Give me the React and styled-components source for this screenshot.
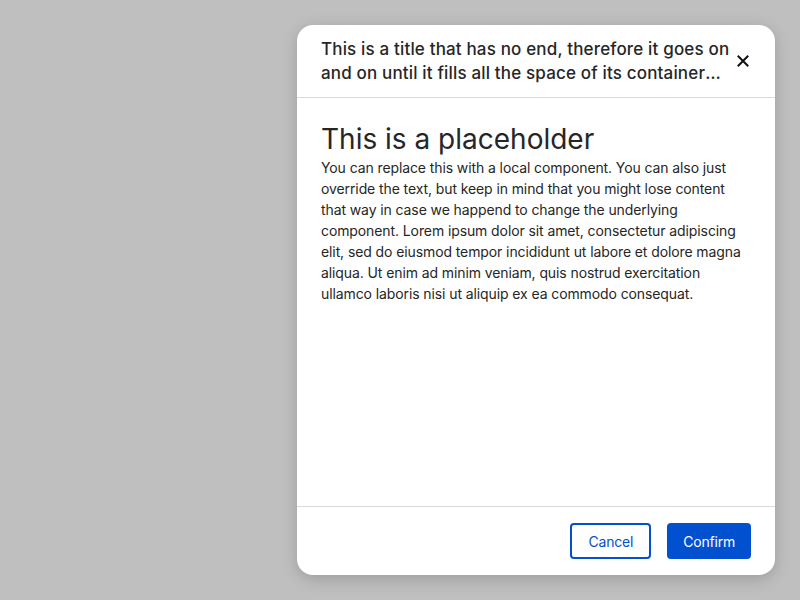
import React from 'react';
import styled, { createGlobalStyle } from 'styled-components';

const GlobalStyle = createGlobalStyle`
  * { box-sizing: border-box; }
  html, body {
    margin: 0;
    height: 100%;
    background: #bfbfbf;
    font-family: 'Inter', 'Liberation Sans', sans-serif;
    color: #262626;
  }
  #root { height: 100%; }
`;

const Backdrop = styled.div`
  height: 100vh;
  display: flex;
  justify-content: flex-end;
  padding: 25px;
`;

const Dialog = styled.div`
  width: 478px;
  height: 100%;
  background: #fff;
  border-radius: 16px;
  box-shadow: 0 4px 16px rgba(0, 0, 0, 0.18);
  display: flex;
  flex-direction: column;
  overflow: hidden;
`;

const Header = styled.div`
  display: flex;
  align-items: center;
  padding: 12px 20px 12px 24px;
  border-bottom: 1px solid #d9d9d9;
`;

const Title = styled.h2`
  flex: 1;
  margin: 0;
  font-size: 17px;
  line-height: 24px;
  font-weight: 500;
  letter-spacing: 0.16px;
  color: #262626;
  display: -webkit-box;
  -webkit-line-clamp: 2;
  -webkit-box-orient: vertical;
  overflow: hidden;
`;

const CloseButton = styled.button`
  flex: none;
  width: 24px;
  height: 24px;
  padding: 0;
  border: none;
  background: none;
  display: flex;
  align-items: center;
  justify-content: center;
  color: #111;
  cursor: pointer;
`;

const Body = styled.div`
  flex: 1;
  padding: 24px;
`;

const Heading = styled.h1`
  margin: 0;
  font-size: 28px;
  line-height: 35px;
  font-weight: 400;
  color: #262626;
`;

const Text = styled.p`
  margin: 0;
  font-size: 14px;
  line-height: 21px;
  letter-spacing: -0.1px;
  color: #262626;
`;

const Footer = styled.div`
  display: flex;
  justify-content: flex-end;
  gap: 16px;
  padding: 16px 24px;
  border-top: 1px solid #d9d9d9;
`;

const Button = styled.button`
  height: 36px;
  padding: 0 16px;
  border-radius: 4px;
  font-family: inherit;
  font-size: 14px;
  letter-spacing: -0.2px;
  cursor: pointer;
  border: ${({ primary }) => (primary ? 'none' : '2px solid #0050d0')};
  background: ${({ primary }) => (primary ? '#0050d0' : '#fff')};
  color: ${({ primary }) => (primary ? '#fff' : '#0050d0')};
`;

const App = () => (
  <>
    <GlobalStyle />
    <Backdrop>
      <Dialog>
        <Header>
          <Title>
            This is a title that has no end, therefore it goes on and on until it fills all the
            space of its container and then it keeps going and going
          </Title>
          <CloseButton aria-label="Close">
            <svg width="12" height="12" viewBox="0 0 12 12">
              <path d="M1.5 1.5 L10.5 10.5 M10.5 1.5 L1.5 10.5" stroke="currentColor" strokeWidth="2" strokeLinecap="square" />
            </svg>
          </CloseButton>
        </Header>
        <Body>
          <Heading>This is a placeholder</Heading>
          <Text>
            You can replace this with a local component. You can also just override the text, but keep
            in mind that you might lose content that way in case we happend to change the underlying
            component. Lorem ipsum dolor sit amet, consectetur adipiscing elit, sed do eiusmod tempor
            incididunt ut labore et dolore magna aliqua. Ut enim ad minim veniam, quis nostrud
            exercitation ullamco laboris nisi ut aliquip ex ea commodo consequat.
          </Text>
        </Body>
        <Footer>
          <Button>Cancel</Button>
          <Button primary>Confirm</Button>
        </Footer>
      </Dialog>
    </Backdrop>
  </>
);

export default App;
